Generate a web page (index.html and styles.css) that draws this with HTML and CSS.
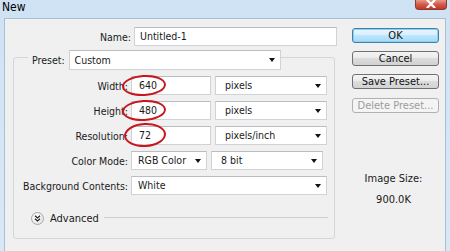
FILE: index.html
```html
<!DOCTYPE html>
<html>
<head>
<meta charset="utf-8">
<link rel="stylesheet" href="styles.css">
</head>
<body>
<div class="window">
  <div class="titlebar">
    <span class="title">New</span>
    <span class="close"><svg width="12" height="8" viewBox="0 0 12 8"><path d="M2.5 0.5 L9.5 7.5 M9.5 0.5 L2.5 7.5" stroke="#fff" stroke-width="2.2" stroke-linecap="round"/></svg></span>
  </div>
  <div class="body">
    <div class="main">
      <div class="row name-row">
        <label class="lbl name-lbl">Name:</label>
        <div class="field name-field">Untitled-1</div>
      </div>
      <div class="group">
        <div class="preset-row">
          <label class="preset-lbl">Preset:</label>
          <div class="field select preset-field">Custom<span class="arrow"></span></div>
        </div>
        <div class="row">
          <label class="lbl">Width:</label>
          <div class="field num">640<span class="ring"></span></div>
          <div class="field select unit">pixels<span class="arrow"></span></div>
        </div>
        <div class="row">
          <label class="lbl">Height:</label>
          <div class="field num">480<span class="ring"></span></div>
          <div class="field select unit">pixels<span class="arrow"></span></div>
        </div>
        <div class="row">
          <label class="lbl">Resolution:</label>
          <div class="field num">72<span class="ring r3"></span></div>
          <div class="field select unit">pixels/inch<span class="arrow"></span></div>
        </div>
        <div class="row">
          <label class="lbl">Color Mode:</label>
          <div class="field select mode">RGB Color<span class="arrow"></span></div>
          <div class="field select unit">8 bit<span class="arrow"></span></div>
        </div>
        <div class="row">
          <label class="lbl">Background Contents:</label>
          <div class="field select wide">White<span class="arrow"></span></div>
        </div>
        <div class="advanced">
          <span class="chev"><svg width="7" height="7" viewBox="0 0 7 7"><path d="M1 0.8 L3.5 3 L6 0.8 M1 3.8 L3.5 6 L6 3.8" fill="none" stroke="#222" stroke-width="1.2"/></svg></span>
          <span class="adv-text">Advanced</span>
          <span class="adv-line"></span>
        </div>
      </div>
    </div>
    <div class="side">
      <button class="btn ok">OK</button>
      <button class="btn">Cancel</button>
      <button class="btn save">Save Preset...</button>
      <button class="btn disabled">Delete Preset...</button>
      <div class="size">
        <div>Image Size:</div>
        <div class="size-val">900.0K</div>
      </div>
    </div>
  </div>
</div>
</body>
</html>
```
FILE: styles.css
```css
* { box-sizing: border-box; }
html, body { margin: 0; padding: 0; }
body {
  width: 450px;
  height: 251px;
  overflow: hidden;
  font-family: "DejaVu Sans Condensed", "DejaVu Sans", sans-serif;
  font-size: 10.5px;
  color: #1a1a1a;
  background: #f0f0f0;
}
.window {
  width: 450px;
  height: 251px;
  background: linear-gradient(#cfe2f4, #d9e8f6);
  display: flex;
  flex-direction: column;
}
.titlebar {
  height: 18px;
  display: flex;
  align-items: flex-start;
  justify-content: space-between;
  padding-left: 2px;
  padding-right: 3px;
}
.title {
  font-size: 12px;
  line-height: 15px;
  color: #000;
}
.close {
  width: 32px;
  height: 11px;
  margin-top: -1px;
  border: 1px solid #8a3b30;
  border-top: none;
  border-radius: 0 0 4px 4px;
  background: linear-gradient(#e9a89b, #d45a47 55%, #c0392a);
  display: flex;
  align-items: center;
  justify-content: center;
}
.body {
  flex: 1;
  margin: 0 4px 0 4px;
  background: #f0f0f0;
  border-top: 1px solid #a9bfd4;
  border-left: 1px solid #a9bfd4;
  border-right: 1px solid #a9bfd4;
  display: flex;
}
.main {
  width: 340px;
  padding-top: 8px;
}
.row {
  display: flex;
  align-items: center;
  height: 19px;
}
.lbl {
  width: 117px;
  text-align: right;
  padding-right: 3px;
  white-space: nowrap;
}
.name-lbl { width: 129px; }
.field {
  position: relative;
  height: 19px;
  background: #fff;
  border: 1px solid #cfd3d6;
  border-top-color: #b9bdc1;
  padding-left: 5px;
  line-height: 17px;
  white-space: nowrap;
}
.name-field { width: 203px; }
.group {
  margin-top: 11px;
  margin-left: 8px;
  width: 322px;
  height: 182px;
  border: 1px solid #d3d6d9;
  border-radius: 3px;
  display: flex;
  flex-direction: column;
  gap: 6px;
}
.preset-row {
  display: flex;
  align-items: center;
  height: 20px;
  margin-top: -8px;
  margin-left: 14px;
}
.preset-lbl {
  background: #f0f0f0;
  padding: 0 4px 0 4px;
  line-height: 20px;
}
.preset-field { width: 212px; height: 20px; line-height: 18px; }
.select .arrow {
  position: absolute;
  right: 5px;
  top: 7px;
  width: 0;
  height: 0;
  border-left: 3px solid transparent;
  border-right: 3px solid transparent;
  border-top: 4px solid #111;
}
.num { width: 80px; padding-left: 7px; }
.unit { width: 112px; margin-left: 4px; padding-left: 9px; }
.mode { width: 76px; padding-left: 6px; }
.wide { width: 196px; padding-left: 6px; }
.ring {
  position: absolute;
  left: -10px;
  top: -2px;
  width: 44px;
  height: 21px;
  border: 2px solid #c8161d;
  border-radius: 50%;
  transform: rotate(-3deg);
}
.ring.r3 { left: -8px; top: -4px; height: 24px; width: 42px; }
.advanced {
  display: flex;
  align-items: center;
  margin-top: 10px;
  padding-left: 17px;
  height: 14px;
}
.chev {
  width: 13px;
  height: 13px;
  border-radius: 50%;
  border: 1px solid #a8a8a8;
  background: radial-gradient(circle at 40% 35%, #ffffff, #dedede);
  display: flex;
  align-items: center;
  justify-content: center;
}
.adv-text { margin-left: 6px; font-size: 11px; }
.adv-line {
  flex: none;
  width: 224px;
  height: 1px;
  background: #cdd0d3;
  margin-left: 5px;
  margin-top: -2px;
}
.side {
  width: 100px;
  padding-left: 7px;
  padding-top: 9px;
  display: flex;
  flex-direction: column;
}
.btn {
  font-family: inherit;
  font-size: 11px;
  color: #111;
  width: 87px;
  height: 15px;
  padding: 0;
  line-height: 13px;
  border: 1px solid #707070;
  border-radius: 3px;
  background: linear-gradient(#f4f4f4, #ebebeb 45%, #dcdcdc 50%, #d2d2d2);
  margin-bottom: 8px;
}
.ok {
  border-color: #3c7fb1;
  background: linear-gradient(#eaf6fd, #d9f0fc 45%, #bee6fd 50%, #a7d9f5);
  box-shadow: inset 0 0 0 1px #8fd0f0;
}
.save { margin-top: 0; margin-bottom: 9px; }
.disabled {
  color: #9d9d9d;
  border-color: #adb2b5;
  background: #f4f4f4;
}
.size {
  margin-top: 47px;
  text-align: center;
  padding-right: 10px;
  font-size: 11px;
  line-height: 21px;
}
```
